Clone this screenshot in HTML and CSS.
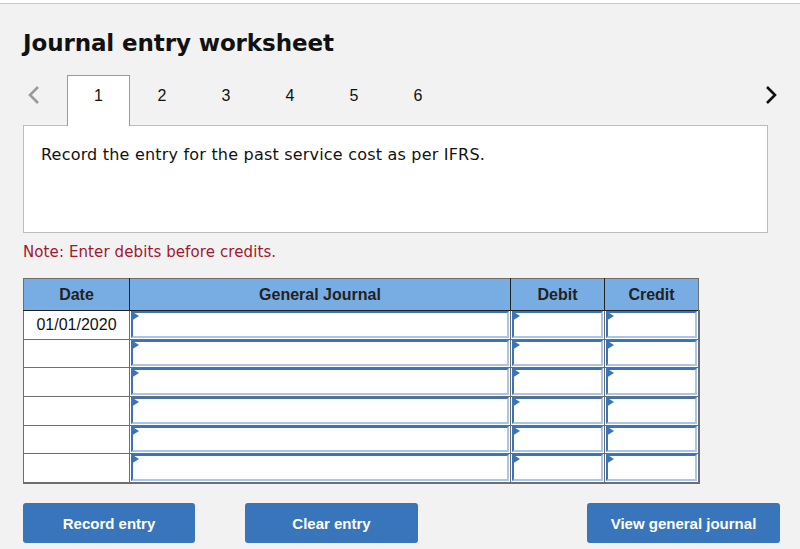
FILE: index.html
```html
<!DOCTYPE html>
<html lang="en">
<head>
<meta charset="utf-8">
<title>Journal entry worksheet</title>
<link rel="stylesheet" href="styles.css">
</head>
<body>
<div class="topbar"></div>
<main class="sheet">
  <h1 class="title">Journal entry worksheet</h1>
  <nav class="tabs">
    <span class="arrow arrow-prev">
      <svg width="13" height="20" viewBox="0 0 13 20"><path d="M11 2 L3 10 L11 18" fill="none" stroke="#9a9a9a" stroke-width="2.6"/></svg>
    </span>
    <span class="tab active">1</span>
    <span class="tab">2</span>
    <span class="tab">3</span>
    <span class="tab">4</span>
    <span class="tab">5</span>
    <span class="tab">6</span>
    <span class="arrow arrow-next">
      <svg width="12" height="20" viewBox="0 0 12 20"><path d="M2 2 L10 10 L2 18" fill="none" stroke="#111" stroke-width="2.6"/></svg>
    </span>
  </nav>
  <section class="prompt">
    <p>Record the entry for the past service cost as per IFRS.</p>
  </section>
  <p class="note">Note: Enter debits before credits.</p>
  <table class="journal">
    <thead>
      <tr>
        <th class="c-date">Date</th>
        <th class="c-gj">General Journal</th>
        <th class="c-amt">Debit</th>
        <th class="c-amt">Credit</th>
      </tr>
    </thead>
    <tbody>
      <tr class="r29">
        <td class="date">01/01/2020</td>
        <td><div class="field"></div></td>
        <td><div class="field"></div></td>
        <td><div class="field"></div></td>
      </tr>
      <tr class="r28">
        <td class="date"></td>
        <td><div class="field"></div></td>
        <td><div class="field"></div></td>
        <td><div class="field"></div></td>
      </tr>
      <tr class="r29">
        <td class="date"></td>
        <td><div class="field"></div></td>
        <td><div class="field"></div></td>
        <td><div class="field"></div></td>
      </tr>
      <tr class="r29">
        <td class="date"></td>
        <td><div class="field"></div></td>
        <td><div class="field"></div></td>
        <td><div class="field"></div></td>
      </tr>
      <tr class="r28">
        <td class="date"></td>
        <td><div class="field"></div></td>
        <td><div class="field"></div></td>
        <td><div class="field"></div></td>
      </tr>
      <tr class="r29">
        <td class="date"></td>
        <td><div class="field"></div></td>
        <td><div class="field"></div></td>
        <td><div class="field"></div></td>
      </tr>
    </tbody>
  </table>
  <div class="actions">
    <button class="btn btn-record">Record entry</button>
    <button class="btn btn-clear">Clear entry</button>
    <button class="btn btn-view">View general journal</button>
  </div>
</main>
</body>
</html>
```
FILE: styles.css
```css
* { box-sizing: border-box; }
html, body { margin: 0; padding: 0; }
body {
  background: #f2f2f2;
  width: 800px;
  height: 549px;
  overflow: hidden;
  font-family: "DejaVu Sans", Verdana, sans-serif;
  color: #111;
}
.topbar {
  height: 4px;
  background: #fff;
  border-bottom: 1px solid #c8c8c8;
}
.sheet {
  padding: 0 20px 0 23px;
}
.title {
  margin: 24px 0 0 0;
  font-size: 23px;
  line-height: 30px;
  font-weight: bold;
  color: #111;
  letter-spacing: -0.1px;
}
.tabs {
  display: flex;
  height: 50px;
  margin-top: 17px;
  font-family: "Liberation Sans", Arial, sans-serif;
  font-size: 16px;
  position: relative;
  z-index: 1;
}
.arrow {
  display: flex;
  align-items: center;
  height: 40px;
}
.arrow-prev { width: 44px; padding-left: 4px; }
.arrow-next { margin-left: auto; padding-right: 3px; }
.tab {
  width: 64px;
  height: 51px;
  text-align: center;
  padding-top: 11px;
  color: #111;
  border: 1px solid transparent;
  border-bottom: none;
}
.tab.active {
  width: 63px;
  background: #fff;
  border-color: #9a9a9a;
}
.prompt {
  width: 745px;
  height: 108px;
  background: #fff;
  border: 1px solid #bdbdbd;
  padding: 0 17px;
}
.prompt p {
  margin: 19px 0 0 0;
  font-size: 16px;
  line-height: 20px;
  letter-spacing: 0.2px;
  color: #111;
}
.note {
  margin: 9px 0 0 0;
  font-size: 15px;
  line-height: 20px;
  color: #a3172e;
  letter-spacing: 0.1px;
}
.journal {
  margin-top: 16px;
  border-collapse: collapse;
  width: 675px;
  table-layout: fixed;
  font-family: "Liberation Sans", Arial, sans-serif;
  font-size: 16px;
}
.journal th {
  height: 32px;
  background: #78ade3;
  color: #222;
  font-weight: bold;
  padding: 0;
  border-top: 1px solid #6e6e6e;
  border-right: 1px solid #222;
  border-bottom: 1px solid #222;
  border-left: 1px solid #222;
}
.journal th:first-child { border-left: 1px solid #6e6e6e; }
.journal th:last-child { border-right: 1px solid #6e6e6e; }
.c-date { width: 106px; }
.c-gj { width: 381px; }
.c-amt { width: 94px; }
.journal td {
  padding: 0 1px 1px 1px;
  background: #fff;
  border: 1px solid #6e6e6e;
  vertical-align: top;
}
.journal td:last-child { border-right-width: 2px; }
.journal tbody tr:last-child td { border-bottom-width: 2px; }
.journal td.date {
  text-align: center;
  vertical-align: middle;
  color: #111;
  padding: 0;
}
.field {
  position: relative;
  background: #fff;
  border-top: 2px solid #3b73b9;
  border-left: 2px solid #3b73b9;
  border-bottom: 2px solid #a9c6e8;
  border-right: 2px solid #a9c6e8;
}
.r29 .field { height: 27px; }
.r28 .field { height: 26px; }
.field::before {
  content: "";
  position: absolute;
  top: -2px;
  left: -2px;
  width: 0;
  height: 0;
  border-left: 8px solid #3b73b9;
  border-top: 5px solid transparent;
  border-bottom: 5px solid transparent;
}
.actions {
  display: flex;
  margin-top: 19px;
}
.btn {
  height: 40px;
  border: none;
  border-radius: 3px;
  background: #3975ba;
  color: #fff;
  font-family: "Liberation Sans", Arial, sans-serif;
  font-size: 15px;
  font-weight: bold;
  padding: 0;
}
.btn-record { width: 172px; }
.btn-clear { width: 173px; margin-left: 50px; }
.btn-view { width: 193px; margin-left: auto; }
```
